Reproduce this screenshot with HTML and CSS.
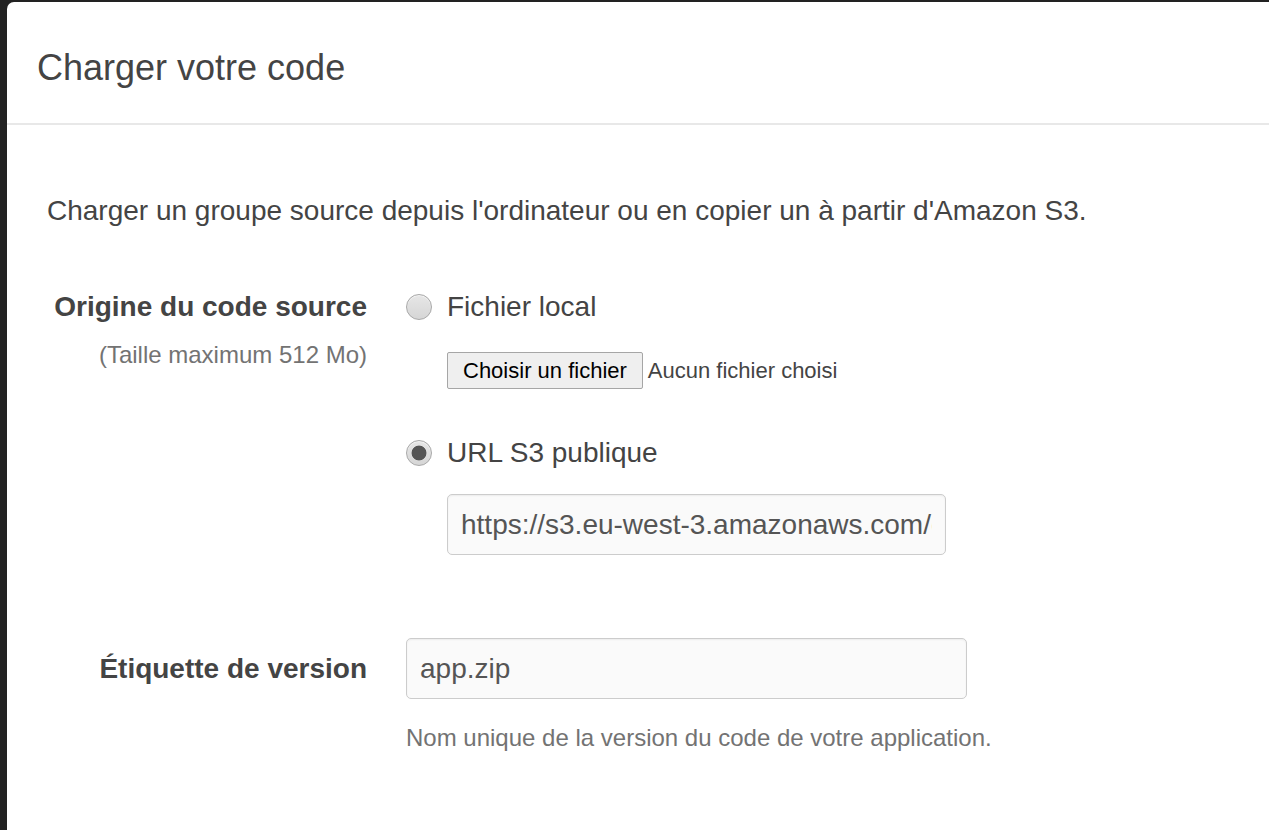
FILE: index.html
```html
<!DOCTYPE html>
<html lang="fr">
<head>
<meta charset="utf-8">
<title>Charger votre code</title>
<link rel="stylesheet" href="styles.css">
</head>
<body>
<div class="modal">
  <div class="modal-header">
    <h4 class="modal-title">Charger votre code</h4>
  </div>
  <div class="modal-body">
    <p class="intro">Charger un groupe source depuis l'ordinateur ou en copier un à partir d'Amazon S3.</p>

    <div class="form-row">
      <div class="label-col">
        <div class="label">Origine du code source</div>
        <div class="label-sub">(Taille maximum 512 Mo)</div>
      </div>
      <div class="control-col">
        <label class="radio-line">
          <input type="radio" name="src" class="radio">
          <span>Fichier local</span>
        </label>
        <div class="file-line">
          <button type="button" class="file-btn">Choisir un fichier</button>
          <span class="file-status">Aucun fichier choisi</span>
        </div>
        <label class="radio-line radio-line-2">
          <input type="radio" name="src" class="radio" checked>
          <span>URL S3 publique</span>
        </label>
        <input type="text" class="text-input url-input" value="https://s3.eu-west-3.amazonaws.com/elasticbeanstalk-samples-eu-west-3/nodejs-sample.zip">
      </div>
    </div>

    <div class="form-row version-row">
      <div class="label-col">
        <div class="label label-version">Étiquette de version</div>
      </div>
      <div class="control-col">
        <input type="text" class="text-input version-input" value="app.zip">
        <p class="help">Nom unique de la version du code de votre application.</p>
      </div>
    </div>
  </div>
</div>
</body>
</html>
```
FILE: styles.css
```css
html, body {
  margin: 0;
  padding: 0;
  height: 100%;
  overflow: hidden;
}
body {
  background: #222222;
  font-family: "Liberation Sans", Arial, sans-serif;
  color: #444444;
}
.modal {
  margin: 2px 0 0 7px;
  background: #ffffff;
  border-top-left-radius: 7px;
  height: calc(100% - 2px);
}
.modal-header {
  height: 123px;
  box-sizing: border-box;
  padding: 11px 30px 0;
  display: flex;
  align-items: center;
  border-bottom: 2px solid #e8e8e8;
}
.modal-title {
  margin: 0;
  font-size: 36px;
  font-weight: normal;
  color: #444444;
  line-height: 40px;
}
.modal-body {
  padding: 66px 0 0 40px;
}
.intro {
  margin: 0;
  font-size: 28px;
  line-height: 40px;
  color: #444444;
}
.form-row {
  display: grid;
  grid-template-columns: 320px 1fr;
  column-gap: 39px;
  margin-top: 56px;
}
.label-col {
  text-align: right;
}
.label {
  font-size: 28px;
  font-weight: bold;
  line-height: 40px;
  color: #444444;
}
.label-sub {
  margin-top: 11px;
  font-size: 24px;
  line-height: 34px;
  color: #737373;
}
.control-col {
  display: flex;
  flex-direction: column;
  align-items: flex-start;
}
.radio-line {
  display: flex;
  align-items: center;
  gap: 15px;
  height: 40px;
  font-size: 28px;
  color: #444444;
}
.radio-line-2 {
  margin-top: 44px;
}
.radio {
  -webkit-appearance: none;
  appearance: none;
  margin: 0;
  width: 26px;
  height: 26px;
  border-radius: 50%;
  border: 1px solid #a8a8a8;
  background: linear-gradient(#e6e6e6, #d6d6d6);
  box-shadow: inset 0 1px 1px rgba(255,255,255,0.6);
  box-sizing: border-box;
}
.radio:checked {
  background: radial-gradient(circle, #555555 0 7px, rgba(85,85,85,0) 7.8px), linear-gradient(#e6e6e6, #d6d6d6);
}
.file-line {
  margin-top: 25px;
  margin-left: 41px;
  display: flex;
  align-items: center;
  gap: 5px;
}
.file-btn {
  height: 37px;
  padding: 0 15px;
  margin: 0;
  border: 1px solid #a6a6a6;
  border-radius: 2px;
  background: #efefef;
  font-family: "Liberation Sans", Arial, sans-serif;
  font-size: 22px;
  color: #000000;
}
.file-status {
  font-size: 22px;
  color: #444444;
}
.text-input {
  box-sizing: border-box;
  height: 61px;
  border: 1px solid #cccccc;
  border-radius: 5px;
  background: #fafafa;
  box-shadow: inset 0 1px 2px rgba(0,0,0,0.06);
  font-family: "Liberation Sans", Arial, sans-serif;
  font-size: 28px;
  color: #555555;
  padding: 0 13px;
  outline: none;
}
.url-input {
  margin-top: 21px;
  margin-left: 41px;
  width: 499px;
  padding-right: 13px;
}
.version-row {
  margin-top: 83px;
  align-items: start;
}
.label-version {
  line-height: 61px;
}
.version-input {
  width: 561px;
}
.help {
  margin: 22px 0 0;
  font-size: 24px;
  line-height: 34px;
  color: #737373;
}
```
